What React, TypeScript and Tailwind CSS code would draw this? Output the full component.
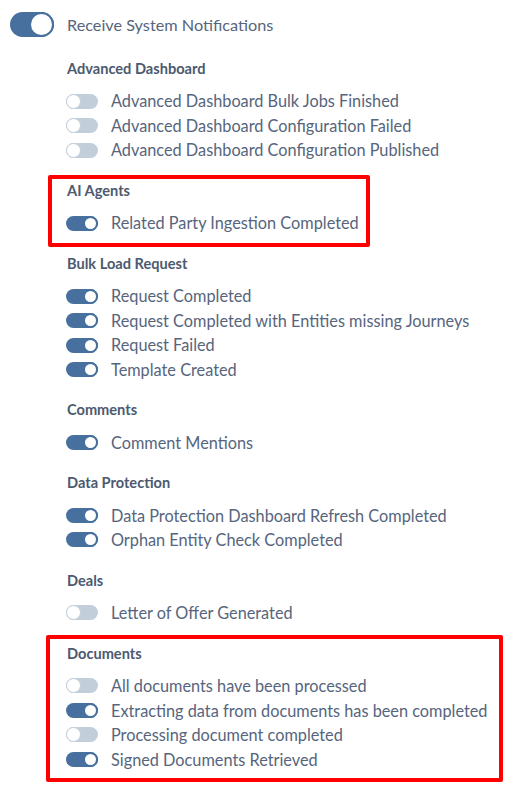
import React from "react";

interface Section {
  title: string;
  items: { label: string; on: boolean }[];
  highlight?: "sm" | "lg";
}

const sections: Section[] = [
  {
    title: "Advanced Dashboard",
    items: [
      { label: "Advanced Dashboard Bulk Jobs Finished", on: false },
      { label: "Advanced Dashboard Configuration Failed", on: false },
      { label: "Advanced Dashboard Configuration Published", on: false },
    ],
  },
  {
    title: "AI Agents",
    highlight: "sm",
    items: [{ label: "Related Party Ingestion Completed", on: true }],
  },
  {
    title: "Bulk Load Request",
    items: [
      { label: "Request Completed", on: true },
      { label: "Request Completed with Entities missing Journeys", on: true },
      { label: "Request Failed", on: true },
      { label: "Template Created", on: true },
    ],
  },
  {
    title: "Comments",
    items: [{ label: "Comment Mentions", on: true }],
  },
  {
    title: "Data Protection",
    items: [
      { label: "Data Protection Dashboard Refresh Completed", on: true },
      { label: "Orphan Entity Check Completed", on: true },
    ],
  },
  {
    title: "Deals",
    items: [{ label: "Letter of Offer Generated", on: false }],
  },
  {
    title: "Documents",
    highlight: "lg",
    items: [
      { label: "All documents have been processed", on: false },
      { label: "Extracting data from documents has been completed", on: true },
      { label: "Processing document completed", on: false },
      { label: "Signed Documents Retrieved", on: true },
    ],
  },
];

function SmallToggle({ on }: { on: boolean }) {
  return (
    <span
      className={`relative inline-flex h-[15px] w-[32px] shrink-0 items-center rounded-full ${
        on ? "bg-[#48709e]" : "bg-[#c3cedb]"
      }`}
    >
      <span
        className={`absolute h-[15px] w-[15px] rounded-full bg-white border ${
          on ? "right-0 border-[#48709e] border-[2px]" : "left-0 border-[#c3cedb] border-[1.5px]"
        }`}
      />
    </span>
  );
}

export default function App() {
  return (
    <div
      className="min-h-[791px] bg-white pl-[10px] pt-[12px] text-[#56657d]"
      style={{ fontFamily: "Lato, 'Open Sans', sans-serif" }}
    >
      <div className="flex h-[25px] items-center">
        <span className="relative inline-flex h-[25px] w-[44px] shrink-0 items-center rounded-full bg-[#48709e]">
          <span className="absolute right-0 h-[25px] w-[25px] rounded-full border-[2px] border-[#48709e] bg-white" />
        </span>
        <span className="ml-[13px] pt-[1px] text-[16.25px]">Receive System Notifications</span>
      </div>

      <div className="mt-[22px] flex flex-col gap-[18.7px] pl-[56px]">
        {sections.map((s) => (
          <div key={s.title} className="relative">
            {s.highlight === "sm" && (
              <div className="pointer-events-none absolute left-[-18px] top-[-6px] h-[72px] w-[322px] rounded-[2px] border-[4px] border-[#ff0000]" />
            )}
            {s.highlight === "lg" && (
              <div className="pointer-events-none absolute left-[-20px] top-[-9px] h-[147px] w-[457px] rounded-[2px] border-[4px] border-[#ff0000]" />
            )}
            <div className="h-[20px] pl-[1px] text-[14.6px] font-bold leading-[20px] text-[#4c5a70]">
              {s.title}
            </div>
            <div className="mt-[9.8px] flex flex-col">
              {s.items.map((it) => (
                <div key={it.label} className="flex h-[24.5px] items-center">
                  <SmallToggle on={it.on} />
                  <span className="ml-[13px] pt-[1px] text-[16.3px]">{it.label}</span>
                </div>
              ))}
            </div>
          </div>
        ))}
      </div>
    </div>
  );
}
